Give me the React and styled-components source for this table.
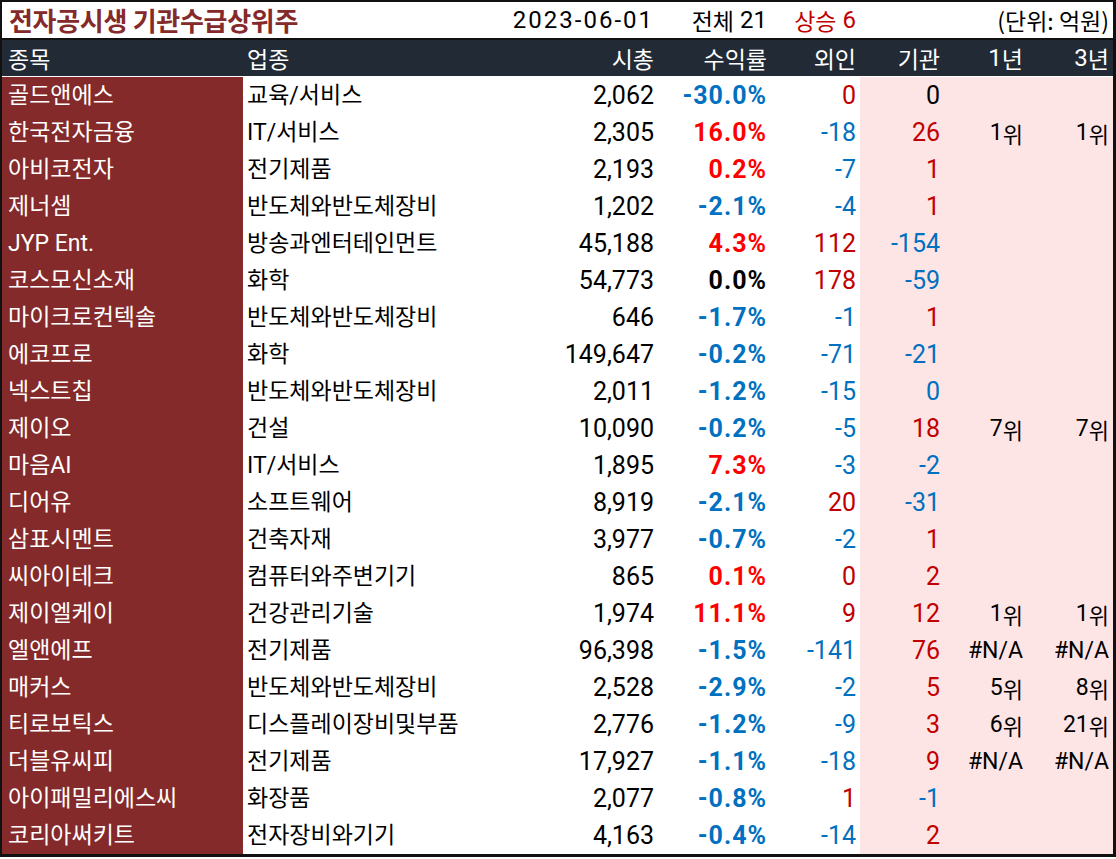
import React from "react";
import styled, { createGlobalStyle } from "styled-components";

const GlobalStyle = createGlobalStyle`
  html, body {
    margin: 0;
    padding: 0;
    background: #ffffff;
  }
  body {
    font-family: "Roboto", "Noto Sans CJK KR", sans-serif;
  }
`;

const COLS = "241px 297px 118px 113px 89px 84px 83px 86px";

const tones = {
  black: "#000000",
  red: "#c00000",
  hot: "#ff0000",
  blue: "#0070c0",
  white: "#ffffff",
  maroon: "#852a2a"
};

const Sheet = styled.div`
  width: 1116px;
  box-sizing: border-box;
  border: 2px solid #111111;
  border-right-width: 3px;
  border-bottom-width: 3px;
  background: #ffffff;
`;

const Grid = styled.div`
  display: grid;
  grid-template-columns: ${COLS};
`;

const TitleRow = styled(Grid)`
  height: 36px;
  border-bottom: 2px solid #111111;
`;

const HeadRow = styled(Grid)`
  height: 36px;
  background: #222b35;
  margin-bottom: 1px;
`;

const DataRow = styled(Grid)`
  height: 37px;
`;

const Cell = styled.div`
  display: flex;
  align-items: center;
  justify-content: ${p => (p.$left ? "flex-start" : "flex-end")};
  padding: ${p => (p.$left ? "0 0 0 6px" : "0 4px 0 0")};
  min-width: 0;
  white-space: nowrap;
  line-height: 1;
`;

const Title = styled(Cell)`
  grid-column: 1 / 3;
  color: ${tones.maroon};
  font-family: "Noto Sans CJK KR", sans-serif;
  font-size: 26px;
  font-weight: 700;
  letter-spacing: -0.3px;
  padding-left: 7px;
`;

const Meta = styled(Cell)`
  grid-column: ${p => p.$span || "auto"};
  color: ${p => tones[p.$tone || "black"]};
  font-size: 24px;
  letter-spacing: ${p => (p.$wide ? "2px" : "0")};
`;

const Word = styled.span`
  font-family: "Noto Sans CJK KR", sans-serif;
  font-size: 23px;
  margin-right: ${p => (p.$gap ? "6px" : "0")};
`;

const HeadCell = styled(Cell)`
  color: #ffffff;
  font-family: "Noto Sans CJK KR", sans-serif;
  font-size: 23px;
  padding-left: ${p => (p.$left ? (p.$first ? "6px" : "4px") : "0")};
  & > b {
    font-family: "Roboto", sans-serif;
    font-weight: 400;
    font-size: 24px;
  }
`;

const NameCell = styled(Cell)`
  background: ${tones.maroon};
  color: #ffffff;
  font-size: 23px;
`;

const SectorCell = styled(Cell)`
  color: #000000;
  font-size: 23px;
  padding-left: 4px;
`;

const NumCell = styled(Cell)`
  background: ${p => (p.$pink ? "#fde5e5" : "transparent")};
  color: ${p => tones[p.$tone || "black"]};
  font-size: 25px;
  font-weight: ${p => (p.$bold ? 700 : 400)};
  letter-spacing: ${p => (p.$bold ? "1px" : "0")};
`;

const RankCell = styled(NumCell)`
  font-size: 23px;
  & > span {
    font-family: "Noto Sans CJK KR", sans-serif;
    font-size: 22px;
  }
`;

// [종목, 업종, 시총, 수익률, 외인, 기관, 1년, 3년, 외인색, 기관색]
const rows = [
  ["골드앤에스", "교육/서비스", "2,062", "-30.0%", "0", "0", "", "", "red", "black"],
  ["한국전자금융", "IT/서비스", "2,305", "16.0%", "-18", "26", "1", "1"],
  ["아비코전자", "전기제품", "2,193", "0.2%", "-7", "1"],
  ["제너셈", "반도체와반도체장비", "1,202", "-2.1%", "-4", "1"],
  ["JYP Ent.", "방송과엔터테인먼트", "45,188", "4.3%", "112", "-154"],
  ["코스모신소재", "화학", "54,773", "0.0%", "178", "-59"],
  ["마이크로컨텍솔", "반도체와반도체장비", "646", "-1.7%", "-1", "1"],
  ["에코프로", "화학", "149,647", "-0.2%", "-71", "-21"],
  ["넥스트칩", "반도체와반도체장비", "2,011", "-1.2%", "-15", "0", "", "", "blue", "blue"],
  ["제이오", "건설", "10,090", "-0.2%", "-5", "18", "7", "7"],
  ["마음AI", "IT/서비스", "1,895", "7.3%", "-3", "-2"],
  ["디어유", "소프트웨어", "8,919", "-2.1%", "20", "-31"],
  ["삼표시멘트", "건축자재", "3,977", "-0.7%", "-2", "1"],
  ["씨아이테크", "컴퓨터와주변기기", "865", "0.1%", "0", "2", "", "", "red", "red"],
  ["제이엘케이", "건강관리기술", "1,974", "11.1%", "9", "12", "1", "1"],
  ["엘앤에프", "전기제품", "96,398", "-1.5%", "-141", "76", "#N/A", "#N/A"],
  ["매커스", "반도체와반도체장비", "2,528", "-2.9%", "-2", "5", "5", "8"],
  ["티로보틱스", "디스플레이장비및부품", "2,776", "-1.2%", "-9", "3", "6", "21"],
  ["더블유씨피", "전기제품", "17,927", "-1.1%", "-18", "9", "#N/A", "#N/A"],
  ["아이패밀리에스씨", "화장품", "2,077", "-0.8%", "1", "-1"],
  ["코리아써키트", "전자장비와기기", "4,163", "-0.4%", "-14", "2"]
];

const flowTone = v => (v.startsWith("-") ? "blue" : "red");

const rateTone = v => {
  if (v.startsWith("-")) return "blue";
  if (v === "0.0%") return "black";
  return "hot";
};

const Rank = ({ value }) => {
  if (!value) return <RankCell $pink />;
  if (value.startsWith("#")) return <RankCell $pink>{value}</RankCell>;
  return (
    <RankCell $pink>
      {value}
      <span>위</span>
    </RankCell>
  );
};

const App = () => {
  return (
    <>
      <GlobalStyle />
      <Sheet>
        <TitleRow>
          <Title $left>전자공시생 기관수급상위주</Title>
          <Meta $wide>2023-06-01</Meta>
          <Meta>
            <Word $gap>전체</Word>21
          </Meta>
          <Meta $tone="red">
            <Word $gap>상승</Word>6
          </Meta>
          <Meta $span="6 / 9">
            <Word>(단위: 억원)</Word>
          </Meta>
        </TitleRow>
        <HeadRow>
          <HeadCell $left $first>종목</HeadCell>
          <HeadCell $left>업종</HeadCell>
          <HeadCell>시총</HeadCell>
          <HeadCell>수익률</HeadCell>
          <HeadCell>외인</HeadCell>
          <HeadCell>기관</HeadCell>
          <HeadCell>
            <b>1</b>년
          </HeadCell>
          <HeadCell>
            <b>3</b>년
          </HeadCell>
        </HeadRow>
        {rows.map(([name, sector, cap, rate, foreign, inst, y1 = "", y3 = "", fTone, iTone]) => (
          <DataRow key={name}>
            <NameCell $left>{name}</NameCell>
            <SectorCell $left>{sector}</SectorCell>
            <NumCell>{cap}</NumCell>
            <NumCell $bold $tone={rateTone(rate)}>
              {rate}
            </NumCell>
            <NumCell $tone={fTone || flowTone(foreign)}>{foreign}</NumCell>
            <NumCell $pink $tone={iTone || flowTone(inst)}>
              {inst}
            </NumCell>
            <Rank value={y1} />
            <Rank value={y3} />
          </DataRow>
        ))}
      </Sheet>
    </>
  );
};

export default App;
